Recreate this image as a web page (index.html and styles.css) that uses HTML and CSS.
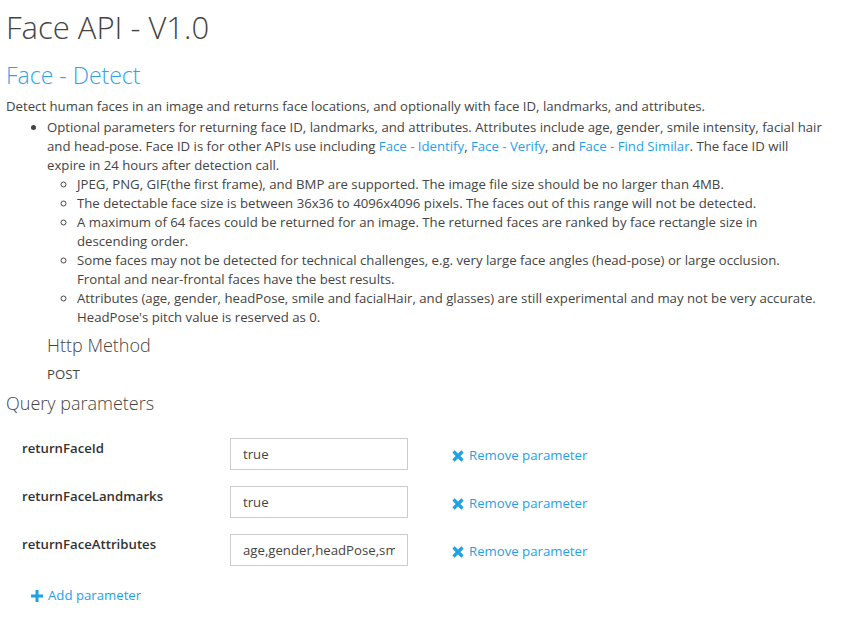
FILE: index.html
```html
<!DOCTYPE html>
<html lang="en">
<head>
<meta charset="UTF-8">
<title>Face API - V1.0</title>
<link rel="stylesheet" href="styles.css">
</head>
<body>
<h1 class="title">Face API - V1.0</h1>
<h2 class="op-name">Face - Detect</h2>
<div class="desc">
    <p>Detect human faces in an image and returns face locations, and optionally with face ID, landmarks, and attributes.</p>
    <ul class="list">
        <li>Optional parameters for returning face ID, landmarks, and attributes. Attributes include age, gender, smile intensity, facial hair and head-pose. Face ID is for other APIs use including <a href="#">Face - Identify</a>, <a href="#">Face - Verify</a>, and <a href="#">Face - Find Similar</a>. The face ID will expire in 24 hours after detection call.
            <ul class="sublist">
                <li>JPEG, PNG, GIF(the first frame), and BMP are supported. The image file size should be no larger than 4MB.</li>
                <li>The detectable face size is between 36x36 to 4096x4096 pixels. The faces out of this range will not be detected.</li>
                <li>A maximum of 64 faces could be returned for an image. The returned faces are ranked by face rectangle size in descending order.</li>
                <li>Some faces may not be detected for technical challenges, e.g. very large face angles (head-pose) or large occlusion. Frontal and near-frontal faces have the best results.</li>
                <li>Attributes (age, gender, headPose, smile and facialHair, and glasses) are still experimental and may not be very accurate. HeadPose's pitch value is reserved as 0.</li>
            </ul>
        </li>
    </ul>
</div>

<div class="method">
    <h3>Http Method</h3>
    <p>POST</p>
</div>

<h3 class="section">Query parameters</h3>
<div class="params">
    <div class="param-row">
        <div class="param-name">returnFaceId</div>
        <input class="param-value" type="text" value="true">
        <a class="remove" href="#"><svg width="12" height="12" viewBox="0 0 12 12"><path d="M1.5 1.5L10.5 10.5M10.5 1.5L1.5 10.5" stroke="currentColor" stroke-width="3.2"/></svg>Remove parameter</a>
    </div>
    <div class="param-row">
        <div class="param-name">returnFaceLandmarks</div>
        <input class="param-value" type="text" value="true">
        <a class="remove" href="#"><svg width="12" height="12" viewBox="0 0 12 12"><path d="M1.5 1.5L10.5 10.5M10.5 1.5L1.5 10.5" stroke="currentColor" stroke-width="3.2"/></svg>Remove parameter</a>
    </div>
    <div class="param-row">
        <div class="param-name">returnFaceAttributes</div>
        <input class="param-value" type="text" value="age,gender,headPose,smile,facialHair,glasses">
        <a class="remove" href="#"><svg width="12" height="12" viewBox="0 0 12 12"><path d="M1.5 1.5L10.5 10.5M10.5 1.5L1.5 10.5" stroke="currentColor" stroke-width="3.2"/></svg>Remove parameter</a>
    </div>
    <a class="add" href="#"><svg width="12" height="12" viewBox="0 0 12 12"><path d="M6 0V12M0 6H12" stroke="currentColor" stroke-width="3"/></svg>Add parameter</a>
</div>
</body>
</html>
```

FILE: styles.css
```css
body{
    margin: 0;
    padding: 7px 19px 0 6px;
    color: #444;
    font-family: "Open Sans", sans-serif;
    font-size: 13.2px;
    line-height: 19px;
}
a{
    color: #1fa1e6;
    text-decoration: none;
}
.title{
    font-weight: 300;
    font-size: 31px;
    line-height: 40px;
    margin: 0;
    color: #444;
}
.op-name{
    font-weight: 300;
    font-size: 23px;
    line-height: 32px;
    color: #2ea4e6;
    margin: 12px 0 0;
}
.desc p{
    margin: 6px 0 0;
}
.list{
    margin: 2px 0 0;
    padding-left: 41px;
}
.sublist{
    margin: 0;
    padding-left: 30px;
    list-style: circle;
}
.method{
    padding-left: 41px;
}
.method h3,
.section{
    font-weight: 300;
    font-size: 18px;
    line-height: 24px;
    margin: 6px 0 0;
}
.method p{
    margin: 8px 0 0;
}
.section{
    margin: 7px 0 0;
}
.params{
    padding: 23px 0 0 16px;
}
.param-row{
    display: flex;
    align-items: flex-start;
    height: 48px;
}
.param-name{
    width: 208px;
    font-weight: 600;
    color: #333;
    padding-top: 1px;
}
.param-value{
    box-sizing: border-box;
    width: 178px;
    height: 32px;
    border: 1px solid #ccc;
    padding: 0 12px;
    font-family: inherit;
    font-size: 13.2px;
    color: #444;
    margin: 0;
}
.remove{
    display: flex;
    align-items: center;
    gap: 5px;
    margin: 8px 0 0 44px;
}
.add{
    display: inline-flex;
    align-items: center;
    gap: 5px;
    margin: 4px 0 0 9px;
}
```
